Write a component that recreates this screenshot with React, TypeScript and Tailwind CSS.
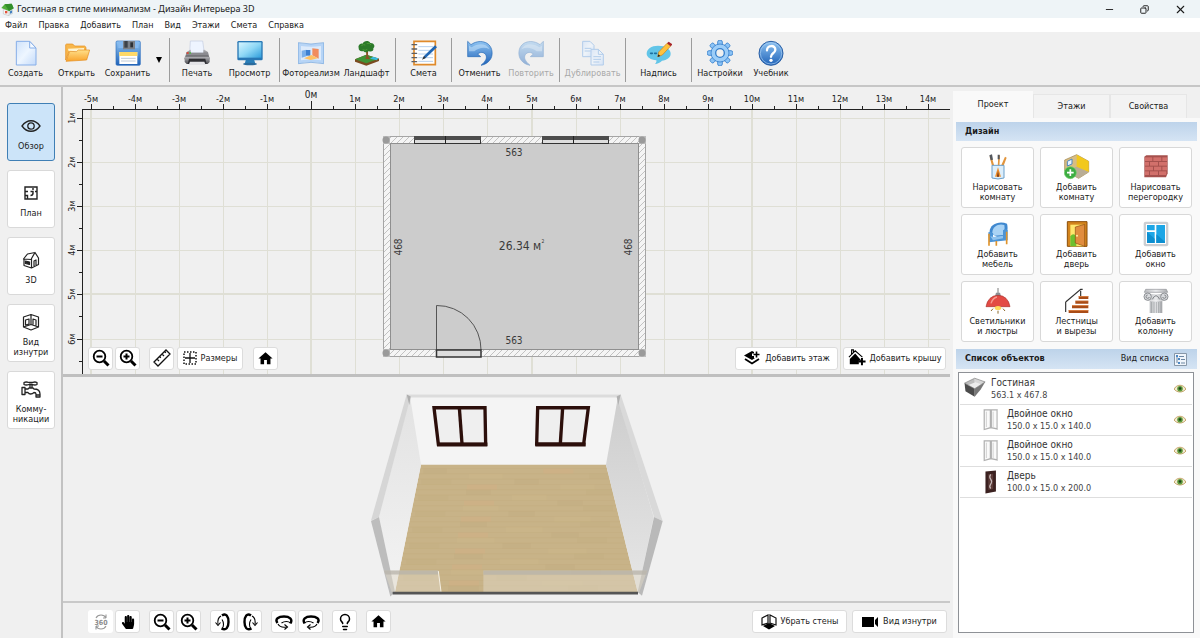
import type { ReactNode } from "react";
import { Minus, Copy, X, Lightbulb } from "lucide-react";
import { FaHandPaper } from "react-icons/fa";
import { MdHome } from "react-icons/md";

const Pic = ({ children, className = "w-[26px] h-[26px]" }: { children: ReactNode, className?: string }) => (
    <svg viewBox="0 0 78 78" className={className} fill="none" aria-hidden="true">{children}</svg>
)

const Gradients = () => (
    <svg width="0" height="0" className="absolute" aria-hidden="true">
        <defs>
            <linearGradient id="paper" x1="0" y1="0" x2="1" y2="1">
                <stop offset="0" stopColor="#cfe2fb" /><stop offset=".5" stopColor="#eef6ff" /><stop offset="1" stopColor="#c3dafa" />
            </linearGradient>
            <linearGradient id="blue" x1="0" y1="0" x2="0" y2="1">
                <stop offset="0" stopColor="#8fc4f2" /><stop offset="1" stopColor="#1f62b8" />
            </linearGradient>
            <linearGradient id="screen" x1="0" y1="0" x2="1" y2="1">
                <stop offset="0" stopColor="#d6f5ff" /><stop offset=".5" stopColor="#8fd8f6" /><stop offset="1" stopColor="#2f9ddb" />
            </linearGradient>
            <linearGradient id="folder" x1="0" y1="0" x2="0" y2="1">
                <stop offset="0" stopColor="#ffe08a" /><stop offset="1" stopColor="#f9a32c" />
            </linearGradient>
            <linearGradient id="grey" x1="0" y1="0" x2="0" y2="1">
                <stop offset="0" stopColor="#b4b4b8" /><stop offset="1" stopColor="#4b4b50" />
            </linearGradient>
            <linearGradient id="stone" x1="0" y1="0" x2="1" y2="0">
                <stop offset="0" stopColor="#b9bbbe" /><stop offset=".5" stopColor="#e9eaec" /><stop offset="1" stopColor="#a9abae" />
            </linearGradient>
        </defs>
    </svg>
)

const HouseLogo = () => (
    <Pic className="w-[13px] h-[13px]">
        <path d="M14 36v30l34 10V46z" fill="#f4f4f4" stroke="#b5b5b5" strokeWidth="3" />
        <path d="M48 46v30l24-12V36z" fill="#cfd9de" />
        <path d="M2 30 22 8l42-4 12 28-28 16z" fill="#4fae3c" />
        <path d="M22 8 48 48 76 32 64 4z" fill="#318f2b" />
        <path d="M24 48h14v14H24z" fill="#e2543b" />
        <path d="M54 50l12-5v14l-12 6z" fill="#3f7fc1" />
    </Pic>
)

const NewIcon = () => (
    <Pic>
        <path d="M10 4h40l19 20v51H10z" fill="url(#paper)" stroke="#86aee8" strokeWidth="3" strokeLinejoin="round" />
        <path d="M50 4v20h19z" fill="#f4f9ff" stroke="#86aee8" strokeWidth="3" strokeLinejoin="round" />
    </Pic>
)

const OpenIcon = () => (
    <Pic>
        <path d="M5 60V14l3-2h18l6 6h30l4 4v10H16z" fill="#f8b74b" stroke="#e48b19" strokeWidth="2" />
        <path d="M12 26l48-2v10H14z" fill="#fff4cf" />
        <path d="M6 64 17 34l20 1 6-5h34L68 60z" fill="url(#folder)" stroke="#e48b19" strokeWidth="2" strokeLinejoin="round" />
    </Pic>
)

const SaveIcon = () => (
    <Pic>
        <rect x="3" y="3" width="73" height="73" rx="4" fill="url(#blue)" stroke="#2f6fc0" strokeWidth="2" />
        <path d="M10 4h60v20H10z" fill="#85b9ef" />
        <path d="M24 3h36v25H24z" fill="#7b8087" />
        <path d="M28 3h10v20H28z" fill="#3c4148" />
        <path d="M46 7h8v15h-8z" fill="#2c3036" />
        <path d="M13 36h54v36H13z" fill="#fff" />
        <path d="M13 36h54v12H13z" fill="#ffd968" />
        <path d="M18 55h44M18 63h44" stroke="#c0cad6" strokeWidth="3" />
    </Pic>
)

const PrinterIcon = () => (
    <Pic>
        <path d="M19 3h37l5 36H17z" fill="#eef4ff" stroke="#c2cbe0" strokeWidth="2" />
        <path d="M8 36l11-7h1v10h38V29h3l11 7 5 22H1z" fill="url(#grey)" />
        <path d="M6 38h66v7H6z" fill="#8b8b90" />
        <path d="M2 50h75v16l-6 6H8l-6-6z" fill="url(#grey)" />
        <path d="M15 56h49l4 16H11z" fill="#2f2f33" />
        <path d="M18 65h43l4 10H14z" fill="#e3e3e6" />
        <path d="M8 39h6" stroke="#e03c2c" strokeWidth="5" />
        <path d="M16 39h5" stroke="#4bb840" strokeWidth="5" />
    </Pic>
)

const MonitorIcon = () => (
    <Pic>
        <path d="M27 58h24l4 13H23z" fill="#2a7fb9" />
        <ellipse cx="39" cy="72" rx="21" ry="4" fill="#2a6b9d" />
        <rect x="1" y="3" width="76" height="58" rx="4" fill="#2877b4" />
        <rect x="5" y="7" width="68" height="46" fill="url(#screen)" />
    </Pic>
)

const PhotoIcon = () => (
    <Pic>
        <path d="M1 8q38 8 76 0v63q-38-8-76 0z" fill="#b6d4f6" stroke="#6ea3de" strokeWidth="2" />
        <path d="M9 18q30 5 60 0v43q-30-5-60 0z" fill="#dceafb" />
        <path d="M11 32l14-3v20l-14 4z" fill="#79aee9" />
        <path d="M24 30h13v17H24z" fill="#3d7fd0" />
        <path d="M43 25l19 2v29l-19-10z" fill="#f18c5d" />
        <path d="M18 55l22-10 20 10-22 5z" fill="#ffc163" />
    </Pic>
)

const TreeIcon = () => (
    <Pic>
        <path d="M3 58l34-14 38 12v7L37 77 3 65z" fill="#7b4b20" />
        <path d="M3 58l34-14 38 12-38 14z" fill="#3f9336" />
        <path d="M48 56l9-6 16 5-5 6z" fill="#39b9dd" />
        <path d="M34 57c4-10 3-16 1-28h8c-2 14-1 20 5 28z" fill="#8a5326" />
        <path d="M14 24c-3-10 8-14 12-13 3-9 18-11 23-2 11-1 16 10 9 16 2 9-8 12-14 8-4 5-13 5-16 0-8 3-15-2-14-9z" fill="#2c7a2a" />
        <path d="M22 17q6-5 12-2M38 11q9-4 13 4M26 29q8 4 14-1" stroke="#4a9a36" strokeWidth="3" />
    </Pic>
)

const EstimateIcon = () => (
    <Pic>
        <path d="M9 4h64v70H9z" fill="#fff" stroke="#e08a2a" strokeWidth="5" />
        <path d="M22 20h44M22 31h44M22 42h44M22 53h44M22 64h44" stroke="#b5cfec" strokeWidth="3" />
        <path d="M3 14h14M3 27h14M3 40h14M3 53h14M3 65h14" stroke="#5d6066" strokeWidth="4" strokeLinecap="round" />
        <path d="M72 16l6 6-34 32-8 3 3-9z" fill="#1f66b4" />
        <path d="M39 48l5 6-11 5z" fill="#333" />
    </Pic>
)

const UndoIcon = ({ flip = false }: { flip?: boolean }) => (
    <Pic>
        <g transform={flip ? "translate(78 0) scale(-1 1)" : undefined} opacity={flip ? 0.45 : 1}>
            <path d="M2 4l10 10C35-3 71 3 75 34c3 22-12 38-33 42 14-12 20-23 14-32-6-9-17-8-24-2l9 8H2z" fill="url(#blue)" stroke="#2468b5" strokeWidth="2" strokeLinejoin="round" />
            <path d="M6 17l8 5c18-14 46-13 54 6-16-8-32-5-46 6H6z" fill="#c9e4fb" opacity=".55" />
        </g>
    </Pic>
)

const DuplicateIcon = () => (
    <Pic>
        <g opacity=".6" stroke="#8ab6e8" strokeWidth="3" strokeLinejoin="round">
            <path d="M8 4h22l12 12v34H8z" fill="url(#paper)" />
            <path d="M33 28h22l15 15v32H33z" fill="url(#paper)" />
            <path d="M55 28v15h15M14 25h20M14 33h18M40 50h23M40 58h23M40 66h18" />
        </g>
    </Pic>
)

const CaptionIcon = () => (
    <Pic>
        <path d="M36 17c22 0 38 10 38 24 0 12-12 19-26 21-4 6-14 9-21 10 4-4 5-7 4-11C14 59 2 51 2 41c0-14 14-24 34-24z" fill="#62c5e8" />
        <path d="M14 40h5M26 40h5M38 40h5" stroke="#1b6e9e" strokeWidth="5" strokeLinecap="round" />
        <path d="M63 10l11 8-25 27-14 5 3-14z" fill="#ffc23c" stroke="#cb831c" strokeWidth="2" />
        <path d="M63 10l5-5 12 8-6 6z" fill="#a8272b" />
        <path d="M37 43l6 5-8 3z" fill="#222" />
    </Pic>
)

const GearIcon = () => (
    <Pic>
        {Array.from({ length: 8 }, (_, i) => (
            <rect key={i} x="32" y="1" width="14" height="18" rx="5" fill="#8cc3f5" stroke="#3680cd" strokeWidth="2.5" transform={`rotate(${i * 45} 39 39)`} />
        ))}
        <circle cx="39" cy="39" r="27" fill="#9ccdf8" stroke="#3680cd" strokeWidth="2.5" />
        <circle cx="39" cy="39" r="13" fill="#f0f0f0" stroke="#3680cd" strokeWidth="4" />
    </Pic>
)

const HelpIcon = () => (
    <Pic>
        <circle cx="39" cy="40" r="36" fill="url(#blue)" stroke="#2a5fa5" strokeWidth="3" />
        <circle cx="39" cy="40" r="32" stroke="#a8cdf2" strokeWidth="2" />
        <path d="M27 31c0-17 26-17 25-1-1 10-13 10-13 20" stroke="#fff" strokeWidth="7" strokeLinecap="round" />
        <circle cx="39" cy="61" r="5" fill="#fff" />
    </Pic>
)

const Tool = ({ label, width, icon, disabled = false }: { label: string, width: string, icon: ReactNode, disabled?: boolean }) => (
    <button disabled={disabled} className={`flex flex-col items-center shrink-0 ${width} ${disabled ? "text-[#a9a9a9]" : "text-[#1b1b1b]"}`}>
        {icon}
        <span className="text-[9px] leading-[15px] whitespace-nowrap">{label}</span>
    </button>
)

const Separator = () => <div className="w-px h-11 shrink-0 -mt-[2px] bg-[#9c9c9c]" />

const Toolbar = () => (
    <div className="flex items-start h-[55px] shrink-0 pt-2 border-b-2 border-[#c6c6c6] bg-[#f0f0f0]">
        <Tool label="Создать" width="w-[51px]" icon={<NewIcon />} />
        <Tool label="Открыть" width="w-[51px]" icon={<OpenIcon />} />
        <Tool label="Сохранить" width="w-[51px]" icon={<SaveIcon />} />
        <button aria-label="Варианты сохранения" className="w-4 shrink-0 pt-[17px] pl-[3px]">
            <svg viewBox="0 0 6 6" className="w-[6px] h-[6px]"><path d="M0 0h6L3 6z" /></svg>
        </button>
        <Separator />
        <Tool label="Печать" width="w-[54px]" icon={<PrinterIcon />} />
        <Tool label="Просмотр" width="w-[51px] mr-1" icon={<MonitorIcon />} />
        <Separator />
        <Tool label="Фотореализм" width="w-[62px]" icon={<PhotoIcon />} />
        <Tool label="Ландшафт" width="w-[49px] mr-1" icon={<TreeIcon />} />
        <Separator />
        <Tool label="Смета" width="w-[55px]" icon={<EstimateIcon />} />
        <Separator />
        <Tool label="Отменить" width="w-[55px]" icon={<UndoIcon />} />
        <Tool label="Повторить" width="w-[48px] mr-1" icon={<UndoIcon flip />} disabled />
        <Separator />
        <Tool label="Дублировать" width="w-[65px]" icon={<DuplicateIcon />} disabled />
        <Separator />
        <Tool label="Надпись" width="w-[65px]" icon={<CaptionIcon />} />
        <Separator />
        <Tool label="Настройки" width="w-[56px]" icon={<GearIcon />} />
        <Tool label="Учебник" width="w-[46px]" icon={<HelpIcon />} />
    </div>
)

const EyeOutline = () => (
    <svg viewBox="0 0 20 20" className="w-5 h-5" fill="none" stroke="#222" strokeWidth="1.3" aria-hidden="true">
        <path d="M1 10c5-7 13-7 18 0-5 7-13 7-18 0z" /><circle cx="10" cy="10" r="3.2" />
    </svg>
)

const PlanOutline = () => (
    <svg viewBox="0 0 20 20" className="w-5 h-5" fill="none" stroke="#222" strokeWidth="1.4" aria-hidden="true">
        <path d="M4 4h12v12H4zM4 8.500h3M9.500 8.500H12v2.500M4 12.500h2.500v3.500M9.500 12.500c1.500 0 2.500-1 2.500-2.500M12 5v2M14 8.500h2" />
    </svg>
)

const HouseOutline = () => (
    <svg viewBox="0 0 20 20" className="w-5 h-5" fill="none" stroke="#222" strokeWidth="1.2" strokeLinejoin="round" aria-hidden="true">
        <path d="M3 9v6.500l7.500 2.500 7-3.500V8l-3.500-5.500L10.500 8.500v9.500M14 2.500L6.500 4 2.500 9l8 .5M13 16v-5l2-1v5" />
        <path d="M4.500 11l4 1v2.500l-4-1z" fill="#222" />
    </svg>
)

const InsideOutline = () => (
    <svg viewBox="0 0 20 20" className="w-5 h-5" fill="none" stroke="#222" strokeWidth="1.2" strokeLinejoin="round" aria-hidden="true">
        <path d="M10 2.500L2.500 5v10L10 18l7.500-3V5zM10 2.500V13M2.500 15l7.500-2.500 7.500 2.500M4.500 8l3.500-1v5l-3.500 1zM12 12.500V7l3 1v5.500" />
    </svg>
)

const TapOutline = () => (
    <svg viewBox="0 0 20 20" className="w-5 h-5" fill="none" stroke="#222" strokeWidth="1.3" strokeLinejoin="round" aria-hidden="true">
        <path d="M3 3.500c2-1 3.500-.5 5 0h3c2-.5 3-1 5 0v2c-2 1-3 .5-5 0H8c-1.500.5-3 1-5 0zM9 6v3M11 6v3M1 8.500h3v7H1zM4 10h3l1-1h4l1 1c4 0 6 1 6 5v3h-4v-3c0-1-1-1.500-2-1.500-2 2-5 2-6 0H4M15 16h4" />
    </svg>
)

const modes = [
    { lines: ["Обзор"], icon: <EyeOutline />, active: true },
    { lines: ["План"], icon: <PlanOutline /> },
    { lines: ["3D"], icon: <HouseOutline /> },
    { lines: ["Вид", "изнутри"], icon: <InsideOutline /> },
    { lines: ["Комму-", "никации"], icon: <TapOutline /> },
]

const Sidebar = () => (
    <aside className="flex flex-col gap-[9px] w-[63px] shrink-0 pt-4 pl-[7px] pr-[6px] border-r-2 border-[#c2c2c2]">
        {modes.map(({ lines, icon, active }) => (
            <button
                key={lines[0]}
                aria-pressed={!!active}
                className={`flex flex-col items-center justify-center gap-[5px] h-[58px] pt-[3px] rounded-[3px] border text-[9px] leading-[10px] ${active ? "bg-[#cce4f9] border-[#3f7fb5]" : "bg-white border-[#d9d9d9]"}`}
            >
                {icon}
                <span className="flex flex-col">{lines.map(line => <span key={line}>{line}</span>)}</span>
            </button>
        ))}
    </aside>
)

const IconButton = ({ label, children, className = "" }: { label: string, children: ReactNode, className?: string }) => (
    <button aria-label={label} className={`flex items-center justify-center w-[25px] h-[23px] rounded-[3px] border border-[#dcdcdc] bg-white text-black ${className}`}>
        {children}
    </button>
)

const TextButton = ({ label, width, children }: { label: string, width: string, children: ReactNode }) => (
    <button className={`flex items-center justify-center gap-1 h-[23px] rounded-[3px] border border-[#dcdcdc] bg-white text-[9px] whitespace-nowrap ${width}`}>
        {children}
        {label}
    </button>
)

const Zoom = ({ plus = false }: { plus?: boolean }) => (
    <svg viewBox="0 0 18 18" className="w-[18px] h-[18px]" fill="none" stroke="#000" aria-hidden="true">
        <circle cx="7.500" cy="7.500" r="5.800" strokeWidth="1.800" />
        <path d="M12 12l4.500 4.500" strokeWidth="3" />
        <path d={plus ? "M4.500 7.500h6M7.500 4.500v6" : "M4.500 7.500h6"} strokeWidth="2" />
    </svg>
)

const RulerIcon = () => (
    <svg viewBox="0 0 18 18" className="w-[18px] h-[18px]" fill="none" stroke="#111" strokeWidth="1.300" aria-hidden="true">
        <path d="M1 13L13 1l4 4L5 17zM4 10l2 2M6.500 7.500l1.300 1.300M9 5l2 2M11.500 2.500l1.300 1.300" />
    </svg>
)

const SizesIcon = () => (
    <svg viewBox="0 0 14 14" className="w-[14px] h-[14px]" fill="none" stroke="#111" aria-hidden="true">
        <path d="M1 1h12v12H1z" strokeWidth="1.500" strokeDasharray="1.500 1.500" />
        <path d="M7 2v10M2 7h10" strokeWidth="1.300" />
    </svg>
)

const AddFloorIcon = () => (
    <svg viewBox="0 0 18 18" className="w-[18px] h-[18px]" fill="none" aria-hidden="true">
        <path d="M9 2L1 6.500 9 11l3-2h-1V7H9V4.500h2V3z" fill="#000" />
        <path d="M2 10l7 4.500 7-4.500" stroke="#000" strokeWidth="1.800" />
        <path d="M13.500 2.500v6M10.500 5.500h6" stroke="#000" strokeWidth="1.600" />
    </svg>
)

const AddRoofIcon = () => (
    <svg viewBox="0 0 20 20" className="w-[18px] h-[18px]" fill="none" aria-hidden="true">
        <path d="M1 9l7-7 8 7M4 6V1h2v3" stroke="#000" strokeWidth="1.200" />
        <path d="M8 5l-6 6v6h10v-4h3z" fill="#000" />
        <path d="M15.500 10v8M11.500 14h8" stroke="#000" strokeWidth="2.200" />
    </svg>
)

// one metre on the plan
const METRE = 44.1
const xAt = (m: number) => Math.round(248 + m * METRE)
const yAt = (m: number) => Math.round(31 + (m - 1) * METRE)
const metresX = Array.from({ length: 20 }, (_, i) => i - 5)
const metresY = [1, 2, 3, 4, 5, 6]

const PlanView = () => (
    <section className="relative flex-[288] min-h-0 overflow-hidden bg-[#f0f0f0]">
        <svg className="absolute inset-0 w-full h-full" fontSize="9" fill="#222" textAnchor="middle">
            <defs>
                <pattern id="hatch" width="6" height="6" patternUnits="userSpaceOnUse">
                    <path d="M0 0h6v6H0z" fill="#f5f5f5" />
                    <path d="M-1 7L7-1M-1 1L1-1M5 7l2-2" stroke="#c2c2c2" strokeWidth="1" />
                </pattern>
            </defs>
            {metresX.map(m => (
                <rect key={m} x={xAt(m) - (m % 5 === 0 ? 1 : 0)} y="23" width={m % 5 === 0 ? 2 : 1} height="100%" fill="#dfdfd5" />
            ))}
            {metresY.map(m => (
                <rect key={m} x="20" y={yAt(m) - (m === 5 ? 1 : 0)} width="100%" height={m === 5 ? 2 : 1} fill="#dfdfd5" />
            ))}
            <rect x="19" y="22" width="100%" height="1" />
            <rect x="19" y="22" width="1" height="100%" />
            {metresX.map(m => (
                <g key={m}>
                    <rect x={xAt(m)} y={m === 0 ? 14 : 17} width="1" height={m === 0 ? 8 : 5} />
                    <rect x={xAt(m + 0.5)} y="19" width="1" height="3" />
                    <text x={xAt(m)} y={m === 0 ? 11 : 15} fontSize={m === 0 ? 10 : 9}>{m}м</text>
                </g>
            ))}
            {metresY.map(m => (
                <g key={m}>
                    <rect x="14" y={yAt(m)} width="5" height="1" />
                    <rect x="16" y={yAt(m + 0.5)} width="3" height="1" />
                    <text transform={`translate(12 ${yAt(m)}) rotate(-90)`}>{m}м</text>
                </g>
            ))}

            <rect x="320.500" y="49.500" width="262" height="220" fill="url(#hatch)" stroke="#a5a5a5" />
            <rect x="327.500" y="56.500" width="248" height="206" fill="#cccccc" stroke="#8f8f8f" />
            {[[323, 53], [579, 53], [323, 266], [579, 266]].map(([x, y]) => (
                <g key={`${x}-${y}`}>
                    <rect x={x - 3} y={y - 4} width="7" height="8" fill="#bdbdbd" />
                    <circle cx={x} cy={y} r="3.500" fill="#9a9a9a" />
                </g>
            ))}
            {[351, 479].map(x => (
                <g key={x}>
                    <rect x={x + 0.5} y="49.500" width="66" height="7" fill="#ddd" stroke="#333" />
                    <rect x={x} y="49" width="67" height="4" fill="#4d4d4d" />
                    <rect x={x + 31} y="49" width="1" height="8" />
                </g>
            ))}
            <path d="M373.500 263v-44.500a44 44 0 0 1 44.500 44.500" fill="none" stroke="#555" />
            <rect x="373.500" y="263" width="44.500" height="7" fill="#ddd" stroke="#333" strokeWidth="1.500" />
            <g fill="#3a3a3a" fontSize="10">
                <text x="451" y="69">563</text>
                <text x="451" y="257">563</text>
                <text transform="translate(339 160) rotate(-90)">468</text>
                <text transform="translate(569 160) rotate(-90)">468</text>
                <text x="457" y="163" fontSize="12">26.34 м</text>
                <text x="480" y="156" fontSize="5">2</text>
            </g>
        </svg>

        <div className="absolute left-[25px] right-1 bottom-1 flex items-center">
            <IconButton label="Уменьшить план"><Zoom /></IconButton>
            <IconButton label="Увеличить план" className="ml-[2px]"><Zoom plus /></IconButton>
            <IconButton label="Линейка" className="ml-[9px]"><RulerIcon /></IconButton>
            <div className="ml-[3px]">
                <TextButton label="Размеры" width="w-[66px]"><SizesIcon /></TextButton>
            </div>
            <IconButton label="Показать весь план" className="ml-[10px]"><MdHome size={17} /></IconButton>
            <div className="ml-auto flex gap-[5px]">
                <TextButton label="Добавить этаж" width="w-[103px]"><AddFloorIcon /></TextButton>
                <TextButton label="Добавить крышу" width="w-[103px]"><AddRoofIcon /></TextButton>
            </div>
        </div>
    </section>
)

const planks = Array.from({ length: 24 }, (_, i) => ({ y: 280 + i * 16, x: 190 + (i * 137) % 420 }))

const SceneView = () => (
    <section className="flex-[225] min-h-0 overflow-hidden border-b-2 border-[#c9c9c9]">
        <svg viewBox="-891 6 2661 672" className="w-full h-full block" role="img" aria-label="Трёхмерный вид комнаты">
            <defs>
                <clipPath id="floor"><path d="M183 269h555l95 382H105z" /></clipPath>
                <linearGradient id="leftWall" x1="0" y1="0" x2="0" y2="1">
                    <stop offset="0" stopColor="#e2e2e2" /><stop offset="1" stopColor="#f3f3f3" />
                </linearGradient>
                <linearGradient id="rightWall" x1="0" y1="0" x2="0" y2="1">
                    <stop offset="0" stopColor="#cdcdcd" /><stop offset="1" stopColor="#e6e6e6" />
                </linearGradient>
            </defs>
            <path d="M140 58h642l-44 211H183z" fill="#f4f4f4" />
            <path d="M140 58h642l-4 9H146z" fill="#dcdcdc" />
            <path d="M183 269h555l95 382H105z" fill="#c8b388" />
            <g clipPath="url(#floor)">
                {planks.map(({ x, y }, i) => (
                    <g key={y}>
                        <path d={`M100 ${y}h740`} stroke="#baa477" strokeWidth="1.500" opacity=".4" />
                        <path d={`M${x} ${y}h${70 + (i * 31) % 60}v16h-${70 + (i * 31) % 60}z`} fill={i % 2 ? "#d2b98c" : "#bfa97d"} opacity=".3" />
                        <path d={`M${(x + 240) % 640 + 120} ${y}h90v16h-90z`} fill={i % 3 ? "#c4ae82" : "#d6b084"} opacity=".35" />
                    </g>
                ))}
            </g>
            <path d="M150 64l33 205-78 382L57 425z" fill="url(#leftWall)" />
            <path d="M140 58l12 6-95 362-24 10z" fill="#d6d6d6" />
            <path d="M140 58l12 6-4 26z" fill="#aeaeae" />
            <path d="M33 438l24-12 48 225-14 13z" fill="#bdbdbd" />
            <path d="M774 64l-36 205 95 382 48-225z" fill="url(#rightWall)" />
            <path d="M782 58l-12 6 112 362 26 12z" fill="#d9d9d9" />
            <path d="M782 58l-12 6 5 26z" fill="#b0b0b0" />
            <path d="M882 426l26 12-62 224-13-11z" fill="#b9b9b9" />
            <path d="M72 586h163l8 65H95zM370 586h492l-24 65H370z" fill="#e0d8c6" opacity=".5" />
            <path d="M72 586h163v12H76zM370 586h492l-4 13H370z" fill="#b5b1a8" opacity=".7" />
            <path d="M235 588l8 62" stroke="#f5f0e4" strokeWidth="3" />
            <path d="M98 654h736" stroke="#555" strokeWidth="8" />
            <g fill="#efefef" stroke="#2c0f0b" strokeWidth="10">
                <path d="M222 98h153l2 110-142-1z" />
                <path d="M298 98l8 108" />
                <path d="M533 98h152l-14 109H530z" />
                <path d="M608 98l-7 108" />
            </g>
            <path d="M231 208h151M526 208h151" stroke="#2c0f0b" strokeWidth="12" />
        </svg>
    </section>
)

// "flat" turns the loop so that its thick side is on top
const Spin = ({ flip = false, flat = false }: { flip?: boolean, flat?: boolean }) => (
    <svg viewBox="0 0 18 18" className="w-[18px] h-[18px]" fill="none" stroke="#000" aria-hidden="true">
        <g transform={`${flip ? "translate(18 0) scale(-1 1)" : ""} ${flat ? "rotate(-90 9 9)" : ""}`}>
            <path d="M8 2.500c4-3 6.500 1 6.500 6.500S12 18 7.500 15.500" strokeWidth="2.400" />
            <path d="M7 3C4 4.500 3.500 8 4 11.500M8 15.500c2-2 2-6 0-9" strokeWidth="1.100" />
            <path d="M1.500 9.500L4 12.500l2.500-3" strokeWidth="1.100" />
        </g>
    </svg>
)

const Rotate360 = () => (
    <svg viewBox="0 0 18 18" className="w-[18px] h-[18px]" fill="none" stroke="#999" aria-hidden="true">
        <path d="M4 5c2-4 8-4 10 0V1.500M14 5h-3M14 13c-2 4-8 4-10 0v3.500M4 13h3" strokeWidth="1.100" />
        <text x="9" y="12" fontSize="7" fontWeight="700" textAnchor="middle" fill="#8c8c8c" stroke="none">360</text>
    </svg>
)

const WallsIcon = () => (
    <svg viewBox="0 0 16 16" className="w-4 h-4" fill="none" aria-hidden="true">
        <path d="M1 11V4l6-3v8zM15 11V4L9 1v8z" stroke="#111" strokeWidth="1.200" />
        <path d="M8 9l6 3-6 3.500L2 12z" fill="#000" />
    </svg>
)

const CameraIcon = () => (
    <svg viewBox="0 0 17 12" className="w-[17px] h-3" aria-hidden="true"><path d="M0 1h12v10H0zM13 4l3-3v10l-3-3z" /></svg>
)

const SceneControls = () => (
    <div className="flex items-center h-[35px] shrink-0 pl-[25px] pr-[3px] pt-[2px]">
        <IconButton label="Вращение 360" className="border-transparent"><Rotate360 /></IconButton>
        <IconButton label="Перемещение" className="ml-[2px]"><FaHandPaper size={14} /></IconButton>
        <IconButton label="Отдалить" className="ml-[9px]"><Zoom /></IconButton>
        <IconButton label="Приблизить" className="ml-[2px]"><Zoom plus /></IconButton>
        <IconButton label="Наклонить вверх" className="ml-[9px]"><Spin /></IconButton>
        <IconButton label="Наклонить вниз" className="ml-[2px]"><Spin flip /></IconButton>
        <IconButton label="Повернуть влево" className="ml-[9px]"><Spin flat /></IconButton>
        <IconButton label="Повернуть вправо" className="ml-[2px]"><Spin flip flat /></IconButton>
        <IconButton label="Освещение" className="ml-[9px]"><Lightbulb size={18} strokeWidth={2} /></IconButton>
        <IconButton label="Исходный вид" className="ml-[9px]"><MdHome size={17} /></IconButton>
        <div className="ml-auto flex gap-[5px]">
            <TextButton label="Убрать стены" width="w-[95px]"><WallsIcon /></TextButton>
            <TextButton label="Вид изнутри" width="w-[95px]"><CameraIcon /></TextButton>
        </div>
    </div>
)

const BrushesIcon = () => (
    <Pic>
        <path d="M22 40L14 8l5-3 10 35zM38 40l2-36h5l-2 36zM46 40L60 8l5 3-12 32z" fill="#e2953c" />
        <path d="M13 4l8-3 3 16-7 2zM38 2h6v14h-6z" fill="#54585e" />
        <path d="M21 34h36v38q-18 6-36 0z" fill="#dceefb" stroke="#6b9fc9" strokeWidth="3" />
        <path d="M30 68l9-28 9 28z" fill="#f0922e" /><path d="M36 68l3-18 3 18z" fill="#6a3316" />
    </Pic>
)

const AddRoomIcon = () => (
    <Pic>
        <path d="M2 18L38 2l36 20v32L44 73 2 50z" fill="#d7bd83" stroke="#9c8046" strokeWidth="2" />
        <path d="M38 2l36 20v32L38 40z" fill="#f2c81d" />
        <path d="M2 50l36-12 36 16-30 19z" fill="#b9ad95" />
        <path d="M10 22l14-7v15l-14 6z" fill="#e8f3fc" stroke="#4d87bd" strokeWidth="3" />
        <circle cx="19" cy="56" r="18" fill="#3dad42" stroke="#6fd069" strokeWidth="2" />
        <path d="M19 46v20M9 56h20" stroke="#fff" strokeWidth="5" />
    </Pic>
)

const bricks = [
    [6, 10, 22], [31, 10, 24], [58, 10, 14], [6, 24, 12], [21, 24, 24], [48, 24, 24],
    [6, 38, 24], [33, 38, 22], [58, 38, 14], [6, 52, 12], [21, 52, 24], [48, 52, 22],
]

const BricksIcon = () => (
    <Pic>
        <path d="M4 8l6-4h64v54l-5 12H4z" fill="#a5504d" />
        {bricks.map(([x, y, w]) => <rect key={`${x}-${y}`} x={x} y={y} width={w} height="11" fill="#d2706b" />)}
    </Pic>
)

const ChairIcon = () => (
    <Pic>
        <path d="M14 34C12 12 40-2 66 8c4 14 0 30-4 44l-12 4z" fill="#3f88cf" />
        <path d="M22 34C22 16 42 6 58 12c2 10 0 20-4 30l-26 2z" fill="#a9d3f5" />
        <path d="M10 34q10-4 14 4v10l30-2V28q8-6 14 0v30l-56 6z" fill="#4c94d6" />
        <path d="M16 46l12 2 26-4v8l-30 6z" fill="#8fc3ef" />
        <path d="M12 38v36M34 60v14M65 32v38" stroke="#e0942c" strokeWidth="5" />
    </Pic>
)

const DoorIcon = () => (
    <Pic>
        <path d="M10 2h59v74H10z" fill="#d3841c" stroke="#8b4d0a" strokeWidth="3" />
        <path d="M19 11h41v65H19z" fill="#ffe66d" />
        <path d="M19 46q9-12 18 0v30H19z" fill="#6ec02f" />
        <path d="M34 18l28-8v66l-28-10z" fill="#e18d3f" stroke="#8f4e12" strokeWidth="2" />
        <circle cx="39" cy="44" r="3" fill="#fff0a8" />
    </Pic>
)

const WindowIcon = () => (
    <Pic>
        <rect x="2" y="2" width="74" height="74" rx="6" fill="#cbced2" />
        <path d="M9 9h60v60H9z" fill="#fff" />
        <path d="M12 12h23v16H12zM12 33h23v33H12zM40 12h26v54H40z" fill="#1da6e6" />
        <path d="M12 33l23 20v13H12zM40 40l26 22v4H40z" fill="#0c8ed0" />
    </Pic>
)

const LampIcon = () => (
    <Pic>
        <path d="M39 0v20" stroke="#7d7d7d" strokeWidth="3" />
        <path d="M33 14h12l3 11H30z" fill="#8b8f94" />
        <path d="M3 56q6-33 36-34 30 1 36 34z" fill="#e34b44" stroke="#a9332d" strokeWidth="2" />
        <path d="M18 46q5-16 18-19" stroke="#f79a90" strokeWidth="4" />
        <ellipse cx="39" cy="60" rx="10" ry="6" fill="#ffd95c" />
        <path d="M24 62l-6 7M39 68v9M54 62l6 7" stroke="#8d6b2d" strokeWidth="3" />
    </Pic>
)

const StairsIcon = () => (
    <Pic>
        <path d="M44 24h29v9H44zM34 38h39v9H34zM24 52h49v9H24zM14 66h59v9H14z" fill="#a94c17" />
        <path d="M44 24h29v2H44zM34 38h39v2H34zM24 52h49v2H24zM14 66h59v2H14z" fill="#e2884a" />
        <path d="M5 42L50 4h6M5 42v30M50 8v16" stroke="#333" strokeWidth="3.500" />
    </Pic>
)

const ColumnIcon = () => (
    <Pic>
        <path d="M8 4h62l4 9H4z" fill="url(#stone)" stroke="#909397" strokeWidth="2" />
        <path d="M14 18h50v20H14z" fill="url(#stone)" />
        <circle cx="14" cy="26" r="11" fill="#d9dbde" stroke="#8d9094" strokeWidth="3" />
        <circle cx="64" cy="26" r="11" fill="#d9dbde" stroke="#8d9094" strokeWidth="3" />
        <path d="M14 21a5 5 0 1 0 5 6M64 21a5 5 0 1 1-5 6M28 34q11-22 22 0" stroke="#7f8286" strokeWidth="3" />
        <path d="M20 39h38v36H20z" fill="url(#stone)" />
        <path d="M26 42v33M33 42v33M40 42v33M47 42v33M54 42v33" stroke="#94979b" strokeWidth="2" />
    </Pic>
)

const actions = [
    { lines: ["Нарисовать", "комнату"], icon: <BrushesIcon /> },
    { lines: ["Добавить", "комнату"], icon: <AddRoomIcon /> },
    { lines: ["Нарисовать", "перегородку"], icon: <BricksIcon /> },
    { lines: ["Добавить", "мебель"], icon: <ChairIcon /> },
    { lines: ["Добавить", "дверь"], icon: <DoorIcon /> },
    { lines: ["Добавить", "окно"], icon: <WindowIcon /> },
    { lines: ["Светильники", "и люстры"], icon: <LampIcon /> },
    { lines: ["Лестницы", "и вырезы"], icon: <StairsIcon /> },
    { lines: ["Добавить", "колонну"], icon: <ColumnIcon /> },
]

const RoomThumb = () => (
    <Pic className="w-6 h-6">
        <path d="M5 20L38 4l34 12-34 22z" fill="#ececec" />
        <path d="M5 20L38 4v14L14 28z" fill="#bdbdbd" />
        <path d="M38 4l34 12-10 8-24-8z" fill="#d6d6d6" />
        <path d="M5 20l33 18v26L8 46z" fill="#4b4b4b" />
        <path d="M38 38l34-22-14 24-20 24z" fill="#777" />
        <path d="M5 20L38 4l34 12-34 22z" stroke="#777" strokeWidth="2" />
    </Pic>
)

const WindowThumb = () => (
    <Pic className="w-6 h-6">
        <path d="M17 6h20v58l-20 6zM40 6h19v62l-19-4z" fill="#fafafa" stroke="#b0b0b0" strokeWidth="4" />
        <path d="M24 12v50M46 12v50M60 6v62" stroke="#cfcfcf" strokeWidth="3" />
    </Pic>
)

const DoorThumb = () => (
    <Pic className="w-6 h-6">
        <path d="M21 5l34-3v68l-34 6z" fill="#3b2120" />
        <path d="M30 14l16-2v50l-16 3z" fill="#5c3b38" />
        <path d="M38 14q-6 8 0 16t0 16 0 14" stroke="#c9bcbc" strokeWidth="4" />
    </Pic>
)

const EyeToggle = () => (
    <svg viewBox="0 0 12 10" className="w-3 h-[10px]" aria-hidden="true">
        <path d="M0 5c3-5 9-5 12 0-3 4-9 4-12 0z" fill="#f3ead0" stroke="#b6924a" strokeWidth=".8" />
        <circle cx="6" cy="4.800" r="2.800" fill="#5c9a3a" /><circle cx="6" cy="4.500" r="1.300" fill="#1f3f1d" />
    </svg>
)

const objects = [
    { name: "Гостиная", size: "563.1 x 467.8", thumb: <RoomThumb />, nested: false },
    { name: "Двойное окно", size: "150.0 x 15.0 x 140.0", thumb: <WindowThumb />, nested: true },
    { name: "Двойное окно", size: "150.0 x 15.0 x 140.0", thumb: <WindowThumb />, nested: true },
    { name: "Дверь", size: "100.0 x 15.0 x 200.0", thumb: <DoorThumb />, nested: true },
]

const tabs = ["Проект", "Этажи", "Свойства"]

const ProjectPanel = () => (
    <aside className="flex flex-col w-[248px] shrink-0 pt-1 pl-px bg-[#f0f0f0] text-[#1b1b1b]">
        <div role="tablist" className="flex items-end text-[9px]">
            {tabs.map((tab, i) => (
                <button
                    key={tab}
                    role="tab"
                    aria-selected={i === 0}
                    className={i === 0
                        ? "w-[80px] h-[27px] bg-[#f9f9f9]"
                        : "w-[77px] h-6 bg-[#f3f3f3] border border-b-0 border-[#e6e6e6]"}
                >
                    {tab}
                </button>
            ))}
        </div>
        <div className="flex flex-col flex-1 min-h-0 px-[3px] pt-1 pb-[5px] bg-[#f9f9f9]">
            <h2 className="h-[19px] shrink-0 pl-[9px] text-[9px] leading-[19px] font-bold bg-linear-to-b from-[#bdd3ea] to-[#d5e4f4]">Дизайн</h2>
            <div className="grid grid-cols-3 gap-[6px] pl-[5px] pr-[5px] pt-[6px] pb-[7px]">
                {actions.map(({ lines, icon }) => (
                    <button key={lines.join()} className="flex flex-col items-center h-[61px] pt-[6px] rounded-[3px] border border-[#d8d8d8] bg-white text-[9px] leading-[10px]">
                        {icon}
                        <span className="flex flex-col mt-[2px]">{lines.map(line => <span key={line}>{line}</span>)}</span>
                    </button>
                ))}
            </div>
            <div className="flex items-center justify-between h-[20px] shrink-0 pl-[9px] pr-[10px] bg-linear-to-b from-[#bdd3ea] to-[#d5e4f4] text-[9px]">
                <h2 className="font-bold">Список объектов</h2>
                <button className="flex items-center gap-[5px]">
                    Вид списка
                    <svg viewBox="0 0 13 13" className="w-[13px] h-[13px]" aria-hidden="true">
                        <path d="M.5.5h12v12H.5z" fill="#f0f5fb" stroke="#8797a8" />
                        <path d="M2 2h2v2H2zM4 5h2v2H4zM4 9h2v2H4z" fill="#4c87c4" />
                        <path d="M5 3.500h5M7 6.500h4M7 10h4M3 4v6" stroke="#6d87a2" fill="none" />
                    </svg>
                </button>
            </div>
            <ul className="flex-1 min-h-0 mt-[3px] ml-[2px] mr-[3px] pt-px px-px border border-[#8e9196] bg-white overflow-hidden">
                {objects.map(({ name, size, thumb, nested }, i) => (
                    <li key={i} className={`flex items-center h-[31px] pr-[6px] border-b border-[#dedede] ${nested ? "pl-[19px]" : "pl-[3px]"}`}>
                        {thumb}
                        <div className="ml-1 flex-1">
                            <p className="text-[10px] leading-3 text-[#333]">{name}</p>
                            <p className="text-[9px] leading-3 text-[#444]">{size}</p>
                        </div>
                        <button aria-label={`Видимость: ${name}`}><EyeToggle /></button>
                    </li>
                ))}
            </ul>
        </div>
    </aside>
)

const menu = ["Файл", "Правка", "Добавить", "План", "Вид", "Этажи", "Смета", "Справка"]

export default function App() {
    return (
        <div className="flex flex-col h-screen overflow-hidden bg-[#f0f0f0] text-[#1b1b1b] font-['DejaVu_Sans_Condensed','Noto_Sans',sans-serif]">
            <Gradients />
            <header className="flex items-center h-[18px] shrink-0 pl-px bg-[#eef4f7]">
                <HouseLogo />
                <h1 className="ml-[3px] text-[9px] font-['Noto_Sans',sans-serif]">Гостиная в стиле минимализм - Дизайн Интерьера 3D</h1>
                <div className="flex items-center gap-[25px] ml-auto mr-[13px]">
                    <button aria-label="Свернуть"><Minus size={11} strokeWidth={2} /></button>
                    <button aria-label="Развернуть"><Copy size={9} strokeWidth={2.5} className="-scale-x-100" /></button>
                    <button aria-label="Закрыть"><X size={13} strokeWidth={2} /></button>
                </div>
            </header>
            <nav className="flex items-center gap-[11px] h-[14px] shrink-0 pt-[2px] pl-[5px] bg-white text-[9px]">
                {menu.map(item => <button key={item}>{item}</button>)}
            </nav>
            <Toolbar />
            <div className="flex flex-1 min-h-0">
                <Sidebar />
                <main className="flex flex-col flex-1 min-w-0">
                    <PlanView />
                    <div className="h-[3px] shrink-0 bg-[#bfbfbf]" />
                    <SceneView />
                    <SceneControls />
                </main>
                <div className="w-[2px] shrink-0 bg-[#f0f0f0]" />
                <ProjectPanel />
            </div>
        </div>
    )
}
